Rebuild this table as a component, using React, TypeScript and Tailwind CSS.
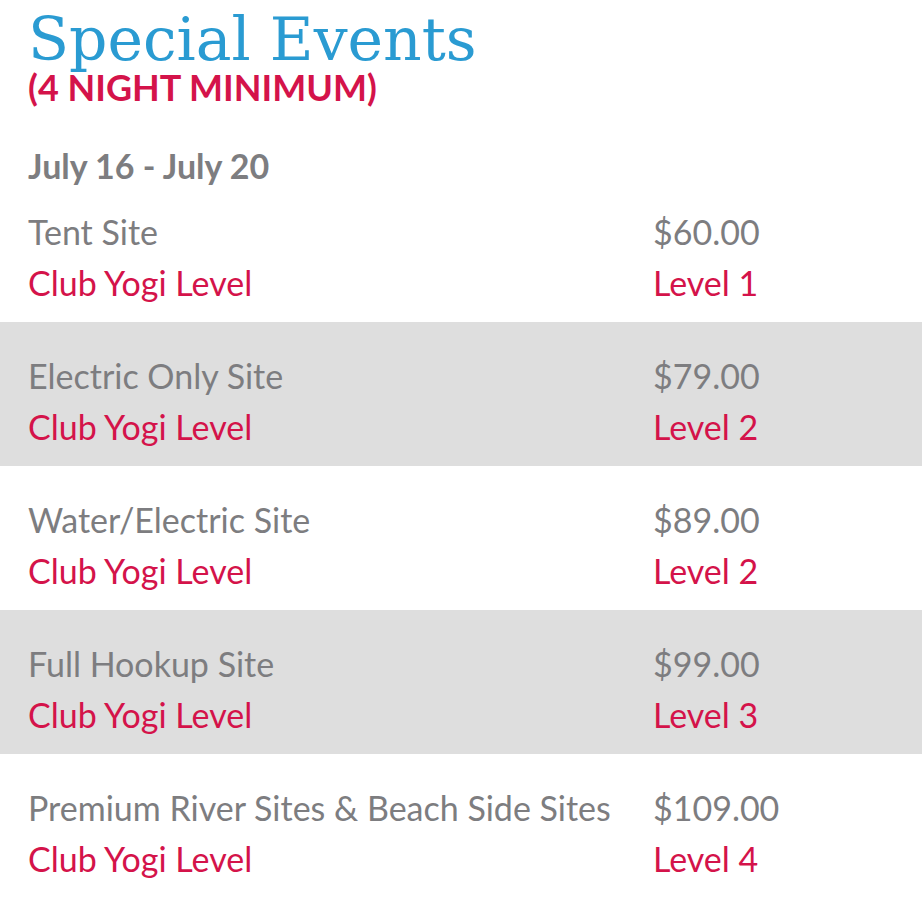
const rates = [
  { site: "Tent Site", price: "$60.00", level: "Level 1" },
  { site: "Electric Only Site", price: "$79.00", level: "Level 2" },
  { site: "Water/Electric Site", price: "$89.00", level: "Level 2" },
  { site: "Full Hookup Site", price: "$99.00", level: "Level 3" },
  { site: "Premium River Sites & Beach Side Sites", price: "$109.00", level: "Level 4" },
];

export default function App() {
  return (
    <div className="w-[922px] min-h-[915px] bg-white font-['Lato',sans-serif]">
      <div className="px-[28px] pt-[8px]">
        <h1 className="font-['DejaVu_Serif',serif] text-[60px] leading-[62px] text-[#2a9bd2]">
          Special Events
        </h1>
        <p className="text-[36px] leading-[34px] font-bold text-[#d4134a]">
          (4 NIGHT MINIMUM)
        </p>
        <p className="mt-[50px] text-[34px] leading-[24px] font-bold text-[#7d7d80]">
          July 16 - July 20
        </p>
      </div>

      <div>
        {rates.map((r, i) => (
          <div
            key={r.site}
            className={`grid grid-cols-[625px_1fr] pl-[28px] pr-[28px] pt-[28px] pb-[14px] text-[34px] leading-[51px] ${
              i % 2 === 1 ? "bg-[#dedede]" : "bg-white"
            }`}
          >
            <span className="text-[#7d7d80]">{r.site}</span>
            <span className="text-[#7d7d80]">{r.price}</span>
            <span className="text-[#d4134a]">Club Yogi Level</span>
            <span className="text-[#d4134a]">{r.level}</span>
          </div>
        ))}
      </div>
    </div>
  );
}
